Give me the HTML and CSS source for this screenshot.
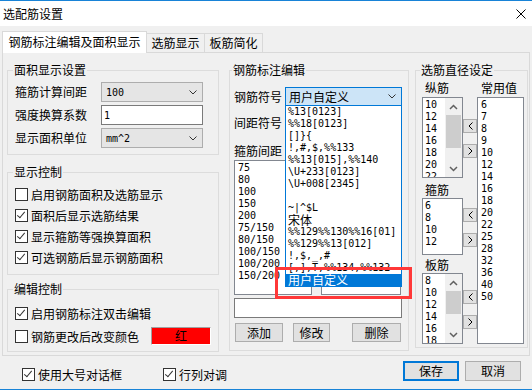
FILE: index.html
```html
<!DOCTYPE html>
<html lang="zh-CN">
<head>
  <meta charset="UTF-8" />
  <title>选配筋设置</title>
  <link rel="stylesheet" href="styles.css">
</head>
<body>
  <div class="window">
    <div class="titlebar">
      <span class="title">选配筋设置</span>
      <svg class="close" width="10" height="10" viewBox="0 0 10 10"><path d="M0.5 0.5L9.5 9.5M9.5 0.5L0.5 9.5" stroke="#000" stroke-width="1" fill="none"/></svg>
    </div>

    <div class="tabs">
      <div class="tab active">钢筋标注编辑及面积显示</div>
      <div class="tab">选筋显示</div>
      <div class="tab">板筋简化</div>
    </div>

    <div class="panel">
      <div class="col-left">
        <fieldset class="group g-area">
          <legend>面积显示设置</legend>
          <div class="form-grid">
            <label>箍筋计算间距</label>
            <div class="combo"><span class="val">100</span><svg class="chev" width="8" height="5" viewBox="0 0 8 5"><polyline points="0.5,0.5 4,4 7.5,0.5" fill="none" stroke="#333"/></svg></div>
            <label>强度换算系数</label>
            <div class="textbox"><span class="val">1</span></div>
            <label>显示面积单位</label>
            <div class="combo"><span class="val">mm^2</span><svg class="chev" width="8" height="5" viewBox="0 0 8 5"><polyline points="0.5,0.5 4,4 7.5,0.5" fill="none" stroke="#333"/></svg></div>
          </div>
        </fieldset>

        <fieldset class="group g-show">
          <legend>显示控制</legend>
          <div class="check"><span class="cb"></span>启用钢筋面积及选筋显示</div>
          <div class="check"><span class="cb on"></span>面积后显示选筋结果</div>
          <div class="check"><span class="cb on"></span>显示箍筋等强换算面积</div>
          <div class="check"><span class="cb on"></span>可选钢筋后显示钢筋面积</div>
        </fieldset>

        <fieldset class="group g-edit">
          <legend>编辑控制</legend>
          <div class="check"><span class="cb on"></span>启用钢筋标注双击编辑</div>
          <div class="check"><span class="cb"></span>钢筋更改后改变颜色<span class="swatch">红</span></div>
        </fieldset>
      </div>

      <fieldset class="group g-mark">
        <legend>钢筋标注编辑</legend>
        <div class="mark-body">
          <div class="field-row">
            <label>钢筋符号</label>
            <div class="combo open">
              <span>用户自定义</span>
              <svg class="chev" width="8" height="5" viewBox="0 0 8 5"><polyline points="0.5,0.5 4,4 7.5,0.5" fill="none" stroke="#333"/></svg>
              <div class="dropdown">
                <div class="dd-item">%13[0123]</div>
                <div class="dd-item">%%18[0123]</div>
                <div class="dd-item">[]}{</div>
                <div class="dd-item">!,#,$,%%133</div>
                <div class="dd-item">%%13[015],%%140</div>
                <div class="dd-item">\U+233[0123]</div>
                <div class="dd-item">\U+008[2345]</div>
                <div class="dd-item"></div>
                <div class="dd-item">~|^$L</div>
                <div class="dd-item"><span class="cjk">宋体</span></div>
                <div class="dd-item">%%129%%130%%16[01]</div>
                <div class="dd-item">%%129%%13[012]</div>
                <div class="dd-item">!,$,_,#</div>
                <div class="dd-item">[,],T,%%134,%%132</div>
                <div class="dd-item sel"><span class="cjk">用户自定义</span></div>
              </div>
            </div>
          </div>
          <div class="field-row second">
            <label>间距符号</label>
            <div class="combo wide"></div>
          </div>
          <div class="sub-label">箍筋间距</div>
          <div class="list-pair">
            <div class="list mid-left">
              <div class="item">75</div>
              <div class="item">80</div>
              <div class="item">100</div>
              <div class="item">150</div>
              <div class="item">200</div>
              <div class="item">75/150</div>
              <div class="item">80/150</div>
              <div class="item">100/150</div>
              <div class="item">100/200</div>
              <div class="item">150/200</div>
            </div>
            <div class="list mid-right"></div>
          </div>
          <div class="textbox wide"></div>
          <div class="btn-row">
            <div class="btn b-add">添加</div>
            <div class="btn b-edit">修改</div>
            <div class="btn b-del">删除</div>
          </div>
        </div>
      </fieldset>

      <fieldset class="group g-dia">
        <legend>选筋直径设定</legend>
        <div class="dia-body">
          <div class="dia-left">
            <div class="dia-label">纵筋</div>
            <div class="dia-row">
              <div class="list short scroll h-long">
                <div class="items">
                  <div class="item">10</div>
                  <div class="item">12</div>
                  <div class="item">14</div>
                  <div class="item">16</div>
                  <div class="item">18</div>
                  <div class="item">20</div>
                  <div class="item">22</div>
                </div>
                <div class="sbar">
                  <div class="arr"><svg width="9" height="6" viewBox="0 0 9 6"><polyline points="1,5 4.5,1.5 8,5" fill="none" stroke="#606060" stroke-width="1.5"/></svg></div>
                  <div class="track"><div class="thumb t-long"></div></div>
                  <div class="arr"><svg width="9" height="6" viewBox="0 0 9 6"><polyline points="1,1 4.5,4.5 8,1" fill="none" stroke="#606060" stroke-width="1.5"/></svg></div>
                </div>
              </div>
              <div class="arrows">
                <div class="sbtn"><svg width="5" height="8" viewBox="0 0 5 8"><polyline points="4.5,0.5 1,4 4.5,7.5" fill="none" stroke="#000"/></svg></div>
                <div class="sbtn"><svg width="5" height="8" viewBox="0 0 5 8"><polyline points="0.5,0.5 4,4 0.5,7.5" fill="none" stroke="#000"/></svg></div>
              </div>
            </div>

            <div class="dia-label gap-a">箍筋</div>
            <div class="dia-row">
              <div class="list short h-mid">
                <div class="item">6</div>
                <div class="item">8</div>
                <div class="item">10</div>
                <div class="item">12</div>
              </div>
              <div class="arrows">
                <div class="sbtn"><svg width="5" height="8" viewBox="0 0 5 8"><polyline points="4.5,0.5 1,4 4.5,7.5" fill="none" stroke="#000"/></svg></div>
                <div class="sbtn"><svg width="5" height="8" viewBox="0 0 5 8"><polyline points="0.5,0.5 4,4 0.5,7.5" fill="none" stroke="#000"/></svg></div>
              </div>
            </div>

            <div class="dia-label gap-b">板筋</div>
            <div class="dia-row">
              <div class="list short scroll h-slab">
                <div class="items">
                  <div class="item">8</div>
                  <div class="item">10</div>
                  <div class="item">12</div>
                  <div class="item">14</div>
                  <div class="item">16</div>
                  <div class="item">18</div>
                </div>
                <div class="sbar">
                  <div class="arr"><svg width="9" height="6" viewBox="0 0 9 6"><polyline points="1,5 4.5,1.5 8,5" fill="none" stroke="#606060" stroke-width="1.5"/></svg></div>
                  <div class="track"><div class="thumb t-slab"></div></div>
                  <div class="arr"><svg width="9" height="6" viewBox="0 0 9 6"><polyline points="1,1 4.5,4.5 8,1" fill="none" stroke="#606060" stroke-width="1.5"/></svg></div>
                </div>
              </div>
              <div class="arrows">
                <div class="sbtn"><svg width="5" height="8" viewBox="0 0 5 8"><polyline points="4.5,0.5 1,4 4.5,7.5" fill="none" stroke="#000"/></svg></div>
                <div class="sbtn"><svg width="5" height="8" viewBox="0 0 5 8"><polyline points="0.5,0.5 4,4 0.5,7.5" fill="none" stroke="#000"/></svg></div>
              </div>
            </div>
          </div>

          <div class="dia-right">
            <div class="dia-label right">常用值</div>
            <div class="list common">
              <div class="item">6</div>
              <div class="item">7</div>
              <div class="item">8</div>
              <div class="item">9</div>
              <div class="item">10</div>
              <div class="item">12</div>
              <div class="item">14</div>
              <div class="item">16</div>
              <div class="item">18</div>
              <div class="item">20</div>
              <div class="item">22</div>
              <div class="item">25</div>
              <div class="item">28</div>
              <div class="item">32</div>
              <div class="item">36</div>
              <div class="item">40</div>
              <div class="item">50</div>
            </div>
          </div>
        </div>
      </fieldset>

      <div class="annot"></div>
    </div>

    <div class="footer">
      <div class="check"><span class="cb on"></span>使用大号对话框</div>
      <div class="check"><span class="cb on"></span>行列对调</div>
      <div class="actions">
        <div class="btn wide default">保存</div>
        <div class="btn wide">取消</div>
      </div>
    </div>
  </div>
</body>
</html>
```

FILE: styles.css
```css
:root {
  --bg: #f0f0f0;
  --accent: #0078d7;
  --frame: #1883d7;
  --group-line: #dcdcdc;
  --tab-line: #d9d9d9;
  --btn-bg: #e1e1e1;
  --btn-line: #adadad;
  --list-line: #828790;
}

*, *::before, *::after {
  box-sizing: border-box;
}

body {
  margin: 0;
  font-family: "Noto Sans CJK SC", "Microsoft YaHei", sans-serif;
  font-size: 12px;
  color: #000;
  background: var(--bg);
}

.window {
  width: 532px;
  height: 390px;
  border-top: 1px solid var(--frame);
  border-bottom: 1px solid var(--frame);
  background: var(--bg);
  display: flex;
  flex-direction: column;
  overflow: hidden;
}

.titlebar {
  height: 25px;
  flex: none;
  background: #fff;
  display: flex;
  align-items: center;
  justify-content: space-between;
  padding: 0 6px 0 3px;
}

.title {
  line-height: 16px;
}

/* tabs */
.tabs {
  height: 26px;
  flex: none;
  display: flex;
  align-items: flex-end;
  padding-left: 2px;
}

.tab {
  width: 58px;
  height: 19px;
  line-height: 17px;
  text-align: center;
  background: var(--bg);
  border: 1px solid var(--tab-line);
  border-left: none;
  border-bottom: none;
}

.tab.active {
  width: 145px;
  height: 22px;
  line-height: 20px;
  background: #fff;
  border-left: 1px solid var(--tab-line);
  margin-bottom: -1px;
  position: relative;
  z-index: 1;
}

.panel {
  height: 304px;
  flex: none;
  margin: 0 2px;
  border: 1px solid var(--tab-line);
  padding: 9px 0 0 4px;
  display: flex;
  align-items: flex-start;
  position: relative;
}

/* group boxes */
.group {
  margin: 0;
  min-width: 0;
  border: 1px solid var(--group-line);
}

.group legend {
  padding: 0 1px;
  margin-left: -2px;
  line-height: 16px;
}

.col-left {
  width: 212px;
  flex: none;
  display: flex;
  flex-direction: column;
}

.g-area {
  height: 93px;
  padding: 4px 7px 0;
}

.g-show {
  height: 111px;
  padding: 4px 7px 0;
  margin-top: 9px;
}

.g-edit {
  height: 71px;
  padding: 5px 7px 0;
  margin-top: 6px;
}

.form-grid {
  display: grid;
  grid-template-columns: 86px 102px;
  grid-auto-rows: 20px;
  row-gap: 3px;
  align-items: center;
}

label {
  line-height: 20px;
  white-space: nowrap;
}

.combo {
  height: 20px;
  border: 1px solid var(--btn-line);
  background: #e5e5e5;
  display: flex;
  align-items: center;
  justify-content: space-between;
  padding: 0 5px 0 4px;
}

.textbox {
  height: 20px;
  border: 1px solid #7a7a7a;
  background: #fff;
  padding-left: 2px;
  display: flex;
  align-items: center;
}

.val {
  font-family: "DejaVu Sans Mono", monospace;
  font-size: 10px;
}

/* checkboxes */
.check {
  display: flex;
  align-items: center;
  height: 21px;
  white-space: nowrap;
}

.g-edit .check {
  height: 22px;
  margin-bottom: 1px;
}

.cb {
  width: 13px;
  height: 13px;
  flex: none;
  margin-right: 3px;
  border: 1px solid #333;
  background: #fff;
  position: relative;
}

.cb.on::after {
  content: "";
  position: absolute;
  left: 3px;
  top: 0;
  width: 4px;
  height: 8px;
  border: solid #333;
  border-width: 0 1px 1px 0;
  transform: rotate(40deg);
}

.swatch {
  width: 61px;
  height: 18px;
  margin-left: 12px;
  background: #f00;
  border: 1px solid;
  border-color: #a0a0a0 #fff #fff #a0a0a0;
  text-align: center;
  line-height: 16px;
}

/* middle group */
.g-mark {
  width: 180px;
  height: 289px;
  flex: none;
  margin-left: 10px;
  padding: 9px 6px 0 4px;
}

.mark-body {
  display: flex;
  flex-direction: column;
}

.field-row {
  display: flex;
  align-items: center;
  height: 19px;
}

.field-row.second {
  margin-top: 7px;
}

.field-row label {
  width: 51px;
  flex: none;
}

.combo.wide,
.combo.open {
  width: 117px;
  height: 19px;
  flex: none;
}

.combo.open {
  background: #cce4f7;
  border-color: var(--accent);
  position: relative;
  padding-left: 3px;
  z-index: 2;
}

.dropdown {
  position: absolute;
  left: -1px;
  top: 100%;
  width: 117px;
  height: 182px;
  border: 1px solid var(--accent);
  background: #fff;
}

.dd-item,
.item {
  height: 12px;
  line-height: 12px;
  font-family: "DejaVu Sans Mono", monospace;
  font-size: 10px;
  white-space: nowrap;
  overflow: hidden;
}

.dd-item {
  padding-left: 2px;
}

.dd-item.sel {
  background: var(--accent);
  color: #fff;
}

.cjk {
  font-family: "Noto Sans CJK SC", sans-serif;
  font-size: 12px;
  line-height: 12px;
}

.sub-label {
  margin-top: 11px;
  height: 17px;
  line-height: 16px;
}

.list-pair {
  display: flex;
  gap: 9px;
  height: 135px;
}

.list {
  border: 1px solid var(--list-line);
  background: #fff;
  padding: 1px 0 0 3px;
  overflow: hidden;
}

.mid-left {
  width: 78px;
}

.mid-right {
  width: 80px;
}

.textbox.wide {
  margin-top: 3px;
  height: 20px;
  width: 168px;
}

.btn-row {
  margin-top: 5px;
  display: flex;
  padding-left: 1px;
}

.btn {
  height: 19px;
  line-height: 17px;
  text-align: center;
  background: var(--btn-bg);
  border: 1px solid var(--btn-line);
}

.b-add {
  width: 48px;
}

.b-edit {
  width: 37px;
  margin-left: 10px;
}

.b-del {
  width: 49px;
  margin-left: 22px;
}

/* right group */
.g-dia {
  width: 113px;
  height: 286px;
  flex: none;
  margin-left: 6px;
  padding: 2px 3px 0 6px;
}

.dia-body {
  display: flex;
}

.dia-left {
  width: 55px;
}

.dia-right {
  width: 47px;
}

.dia-label {
  height: 17px;
  line-height: 16px;
  padding-left: 3px;
}

.dia-label.right {
  padding-left: 4px;
}

.dia-label.gap-a {
  margin-top: 4px;
  height: 16px;
}

.dia-label.gap-b {
  margin-top: 2px;
  height: 16px;
}

.dia-row {
  display: flex;
}

.list.short {
  width: 41px;
  padding-left: 2px;
}

.h-long { height: 81px; }
.h-mid { height: 57px; }
.h-slab { height: 71px; }

.list.scroll {
  display: flex;
  padding: 0;
}

.list.scroll .items {
  flex: 1;
  padding: 1px 0 0 2px;
}

.sbar {
  width: 17px;
  flex: none;
  background: var(--bg);
  display: flex;
  flex-direction: column;
}

.sbar .arr {
  height: 17px;
  flex: none;
  display: flex;
  align-items: center;
  justify-content: center;
}

.sbar .track {
  flex: 1;
}

.thumb {
  margin: 0 1px;
  background: #cdcdcd;
}

.t-long { height: 33px; }
.t-slab { height: 23px; }

.arrows {
  width: 14px;
  flex: none;
  display: flex;
  flex-direction: column;
  justify-content: center;
  gap: 11px;
  padding-top: 2px;
}

.sbtn {
  width: 14px;
  height: 14px;
  background: var(--btn-bg);
  border: 1px solid var(--btn-line);
  display: flex;
  align-items: center;
  justify-content: center;
}

.list.common {
  height: 247px;
}

/* annotation frame drawn over the screenshot */
.annot {
  position: absolute;
  left: 272px;
  top: 214px;
  width: 137px;
  height: 32px;
  border: 3px solid #ff3838;
  z-index: 3;
}

/* footer */
.footer {
  height: 33px;
  flex: none;
  display: flex;
  align-items: flex-start;
  padding: 0 11px 0 22px;
}

.footer .check {
  margin-top: 10px;
  height: 16px;
}

.footer .check + .check {
  margin-left: 41px;
}

.actions {
  margin-left: auto;
  margin-top: 5px;
  display: flex;
  gap: 6px;
}

.btn.wide {
  width: 56px;
  height: 20px;
  line-height: 18px;
}

.btn.default {
  border-color: var(--accent);
  box-shadow: inset 0 0 0 1px var(--accent);
}
```
